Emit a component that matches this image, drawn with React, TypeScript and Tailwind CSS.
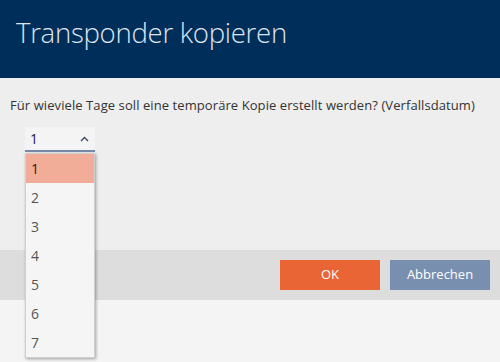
import React from "react";

export default function App() {
  const items = [1, 2, 3, 4, 5, 6, 7];
  return (
    <div className="relative w-[500px] h-[362px] bg-[#f4f4f4] overflow-hidden" style={{ fontFamily: '"Open Sans", "Noto Sans", sans-serif' }}>
      <div className="h-[78px] bg-[#002e5a] pl-[16px] pt-[12px]">
        <h1 className="text-[27.6px] font-light text-[#dce4ee] tracking-[-0.3px] leading-[40px]">Transponder kopieren</h1>
      </div>
      <div className="h-[172px] bg-[#eeeeee] pt-[18px] px-[10px]">
        <p className="text-[13px] text-[#333333] leading-[19px] tracking-[0.08px]">Für wieviele Tage soll eine temporäre Kopie erstellt werden? (Verfallsdatum)</p>
        <div className="ml-[15px] mt-[12px] w-[70px] h-[25px] bg-[#f4f4f4] border-b-2 border-[#7a8aa8] flex items-center justify-between pl-[5px] pr-[6px]">
          <span className="text-[14px] text-[#1d1a4a]">1</span>
          <svg width="9" height="6" viewBox="0 0 9 6"><path d="M1 5 L4.5 1.5 L8 5" fill="none" stroke="#3d4a66" strokeWidth="1.4" /></svg>
        </div>
      </div>
      <div className="h-[50px] bg-[#dddddd] flex items-center justify-end gap-[10px] pr-[10px]">
        <button className="w-[100px] h-[30px] bg-[#ea6535] text-white text-[13px]">OK</button>
        <button className="w-[100px] h-[30px] bg-[#788fb0] text-white text-[13px]">Abbrechen</button>
      </div>
      <div className="absolute left-[25px] top-[153px] w-[70px] bg-[#f5f5f5] shadow-[1px_1px_3px_rgba(0,0,0,0.35)] border border-[#cfcfcf]">
        {items.map((n) => (
          <div key={n} className={`h-[29px] flex items-center pl-[5px] text-[14px] ${n === 1 ? "bg-[#f2ad98] text-[#222222]" : "text-[#555555]"}`}>
            {n}
          </div>
        ))}
      </div>
    </div>
  );
}
